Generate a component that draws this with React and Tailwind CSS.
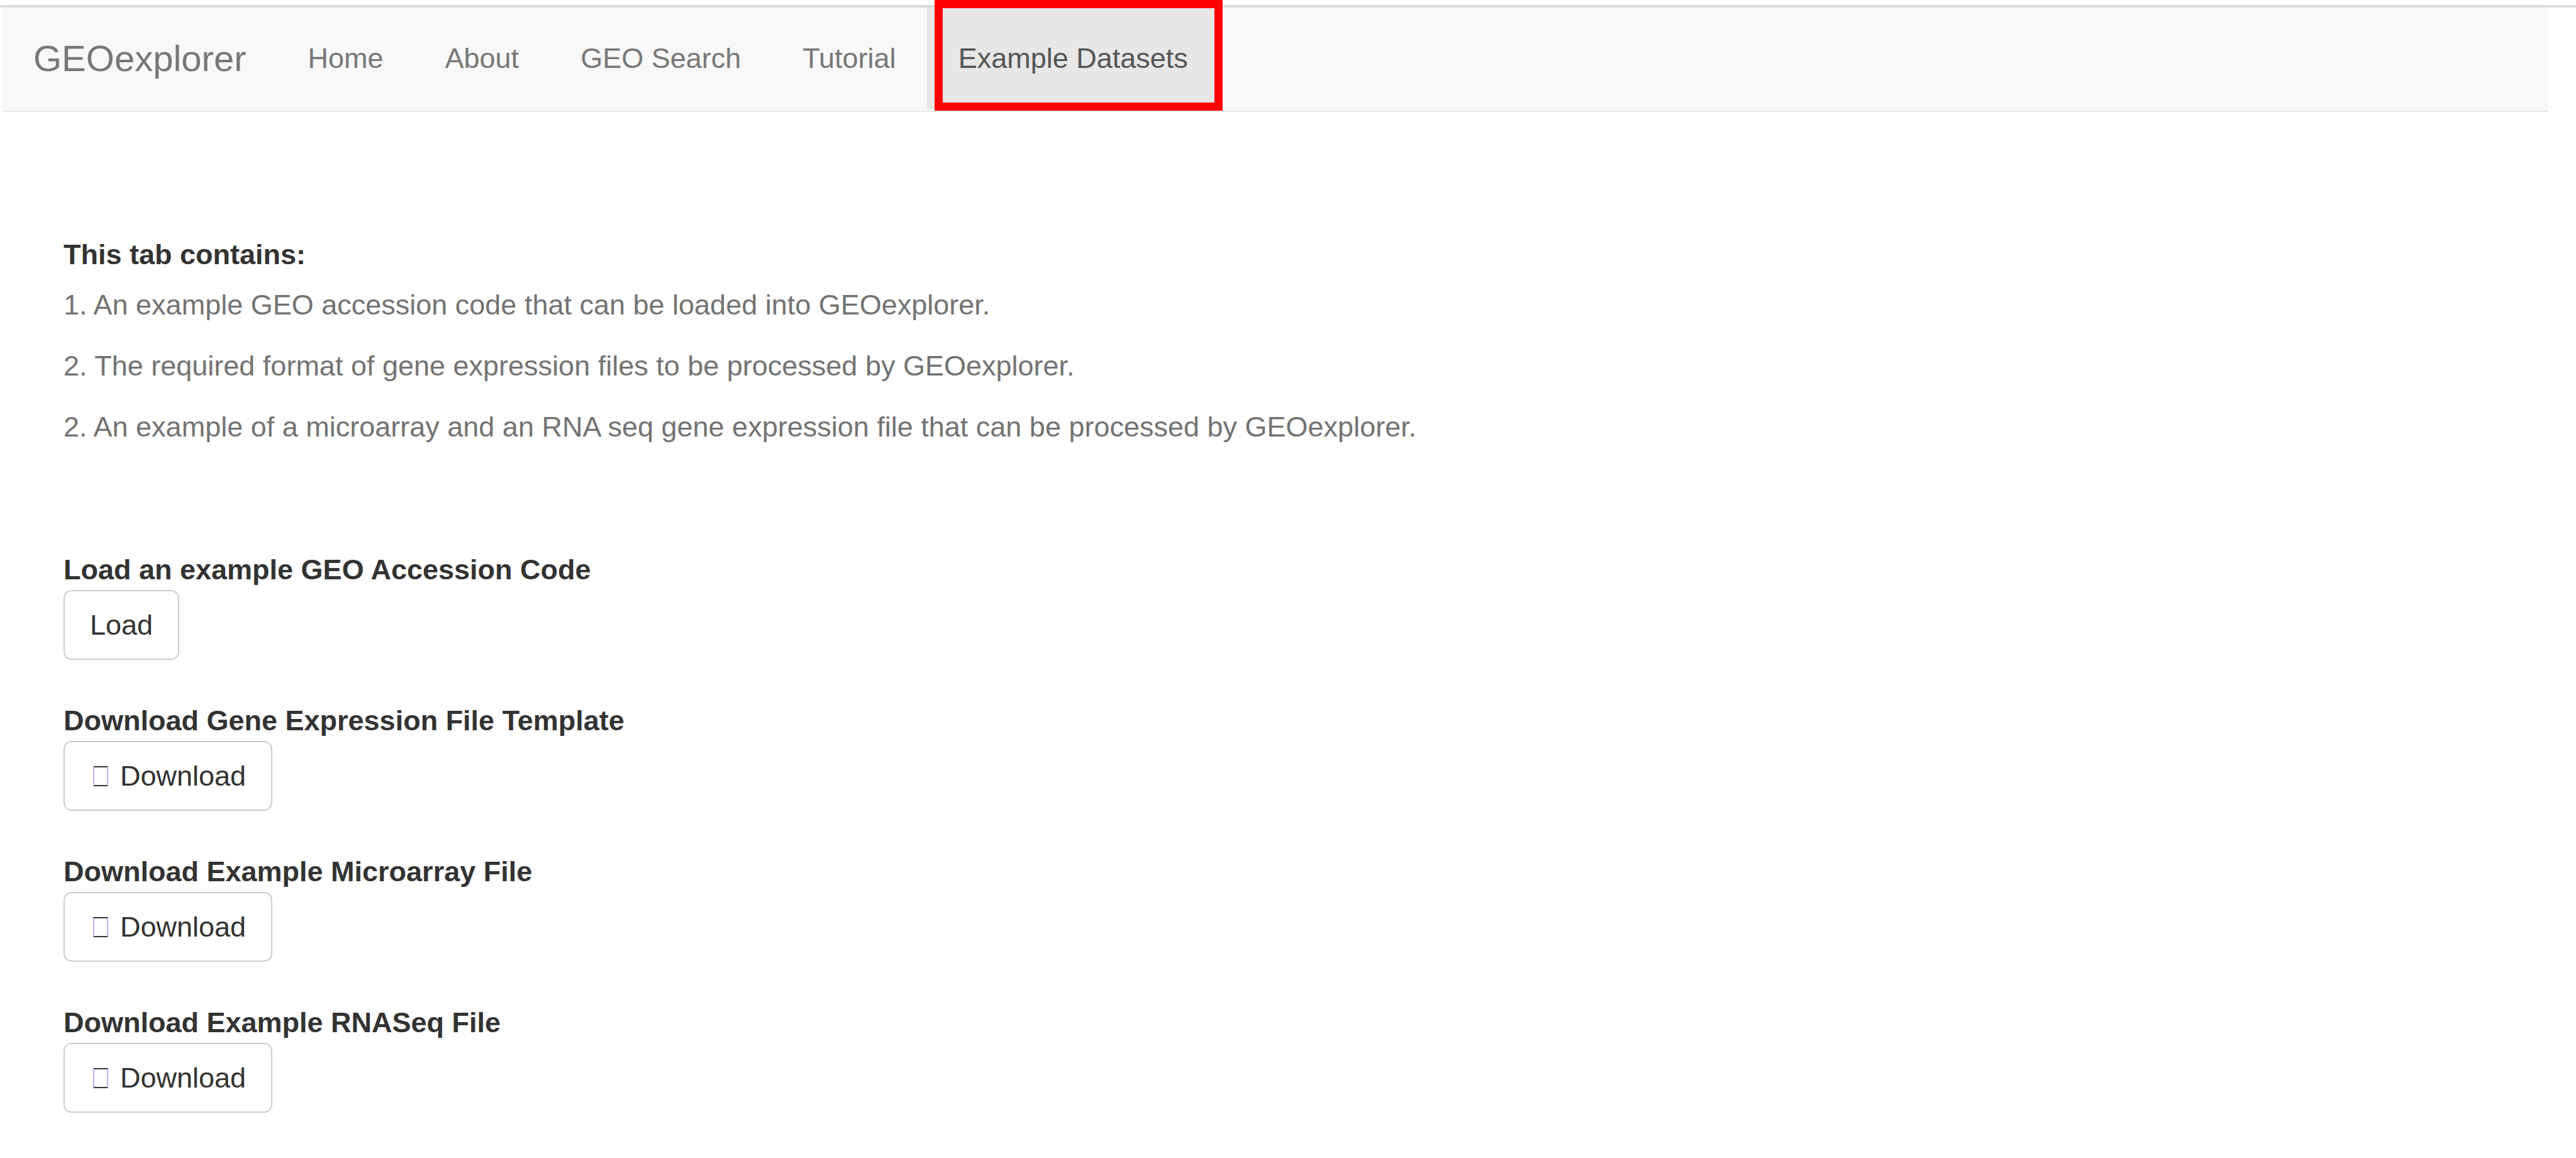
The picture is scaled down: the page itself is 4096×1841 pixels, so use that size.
import React from "react";

const NAV_ITEMS = ["Home", "About", "GEO Search", "Tutorial"];

const NOTES = [
  "1. An example GEO accession code that can be loaded into GEOexplorer.",
  "2. The required format of gene expression files to be processed by GEOexplorer.",
  "2. An example of a microarray and an RNA seq gene expression file that can be processed by GEOexplorer.",
];

const ACTIONS = [
  { id: "load", title: "Load an example GEO Accession Code", label: "Load" },
  { id: "template", title: "Download Gene Expression File Template", label: "Download", glyph: true },
  { id: "microarray", title: "Download Example Microarray File", label: "Download", glyph: true },
  { id: "rnaseq", title: "Download Example RNASeq File", label: "Download", glyph: true },
];

/* Empty box shown in place of the download glyph. */
function MissingGlyph() {
  return (
    <span
      aria-hidden="true"
      className="mr-[19px] ml-[5px] h-[32px] w-[24px] border-2 border-x-[#b4b4ee] border-y-[#333333]"
    />
  );
}

function NavBar() {
  return (
    <nav className="mr-[44px] ml-[4px] flex h-[166px] items-start border-b-2 border-[#e7e7e7] bg-[#f8f8f8] text-[#777777]">
      <a href="#home" className="px-[49px] py-[48px] text-[58px] leading-[65px]">
        GEOexplorer
      </a>
      <ul className="flex">
        {NAV_ITEMS.map((item) => (
          <li key={item}>
            <a href="#tab" className="block px-[49px] py-[48px]">
              {item}
            </a>
          </li>
        ))}
        <li className="relative">
          <a href="#datasets" aria-current="page" className="block bg-[#e7e7e7] px-[50px] py-[48px] text-[#555555]">
            Example Datasets
          </a>
          <span
            aria-hidden="true"
            className="pointer-events-none absolute -top-[12px] -right-[5px] -bottom-[3px] left-[12px] border-[13px] border-[#ff0000]"
          />
        </li>
      </ul>
    </nav>
  );
}

export default function App() {
  return (
    <div className="min-h-screen bg-white font-['Liberation_Sans',Arial,sans-serif] text-[45px] leading-[65px] whitespace-nowrap text-[#333333]">
      <header className="pt-[8px]">
        <div className="h-[4px] bg-[#d9dbda]" />
        <NavBar />
      </header>
      <main className="px-[101px] pt-[194px]">
        <section>
          <h1 className="font-bold">This tab contains:</h1>
          <div className="mt-[15px] flex flex-col gap-[32px] text-[#737373]">
            {NOTES.map((note) => (
              <p key={note}>{note}</p>
            ))}
          </div>
        </section>
        <div className="mt-[162px] flex flex-col gap-[64px]">
          {ACTIONS.map(({ id, title, label, glyph }) => (
            <section key={id}>
              <h2 id={id} className="font-bold">
                {title}
              </h2>
              <button
                type="button"
                aria-describedby={id}
                className="flex h-[111px] items-center rounded-[13px] border-2 border-[#cccccc] bg-white px-[40px]"
              >
                {glyph && <MissingGlyph />}
                {label}
              </button>
            </section>
          ))}
        </div>
      </main>
    </div>
  );
}
